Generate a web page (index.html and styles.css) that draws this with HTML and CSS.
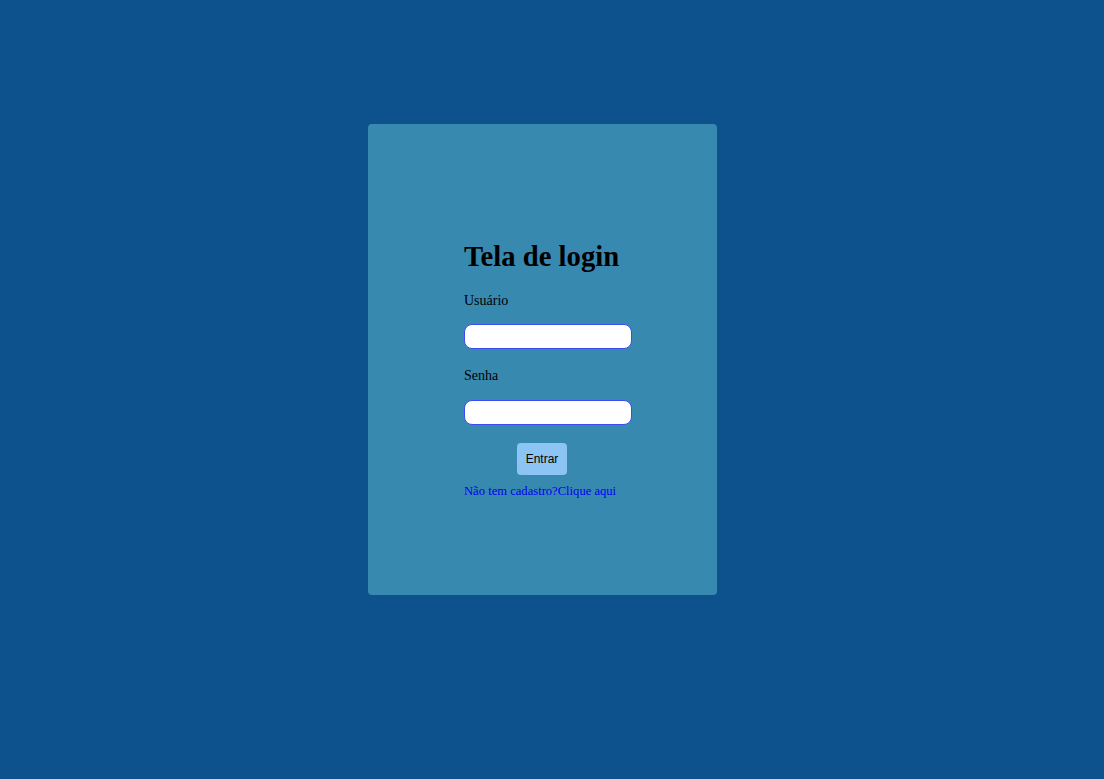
FILE: index.html
```html
<!DOCTYPE html>
<html lang="pt-BR">
<head>
<meta charset="utf-8">
<title>Tela de login</title>
<link rel="stylesheet" href="styles.css">
</head>
<body>
<main class="card">
  <form class="form">
    <h1 class="title">Tela de login</h1>
    <label class="label" for="user">Usuário</label>
    <input class="field" id="user" type="text">
    <label class="label label-senha" for="pass">Senha</label>
    <input class="field field-senha" id="pass" type="password">
    <div class="actions"><button class="btn" type="button">Entrar</button></div>
    <a class="link" href="#">Não tem cadastro?Clique aqui</a>
  </form>
</main>
</body>
</html>
```
FILE: styles.css
```css
html, body {
  margin: 0;
  padding: 0;
}
body {
  background: #0d518d;
  min-height: 100vh;
  font-family: "Liberation Serif", "Times New Roman", serif;
  overflow: hidden;
}
.card {
  box-sizing: border-box;
  width: 349px;
  height: 471px;
  margin: 124px 0 0 368px;
  background: #3889b0;
  border-radius: 4px;
  padding: 116px 0 0 96px;
}
.form {
  display: flex;
  flex-direction: column;
  align-items: flex-start;
  width: 156px;
}
.title {
  margin: 0;
  font-size: 28.7px;
  font-weight: bold;
  color: #000;
  line-height: normal;
  white-space: nowrap;
}
.label {
  margin-top: 20px;
  font-size: 14px;
  color: #000;
  line-height: normal;
}
.label-senha {
  margin-top: 19px;
}
.field {
  box-sizing: border-box;
  margin: 15px 0 0 0;
  width: 168px;
  height: 25px;
  border: 1px solid #3b4cf2;
  border-radius: 8px;
  background: #fff;
  padding: 0 6px;
  outline: none;
}
.field-senha {
  margin-top: 16px;
}
.actions {
  align-self: stretch;
  display: flex;
  justify-content: center;
  margin-top: 18px;
}
.btn {
  width: 50px;
  height: 32px;
  border: none;
  border-radius: 4px;
  background: #8cc4f6;
  color: #000;
  font-family: "Liberation Sans", Arial, sans-serif;
  font-size: 12px;
  padding: 0;
}
.link {
  margin-top: 9px;
  font-size: 12.6px;
  color: #0000ee;
  text-decoration: none;
  line-height: normal;
  white-space: nowrap;
}
```
